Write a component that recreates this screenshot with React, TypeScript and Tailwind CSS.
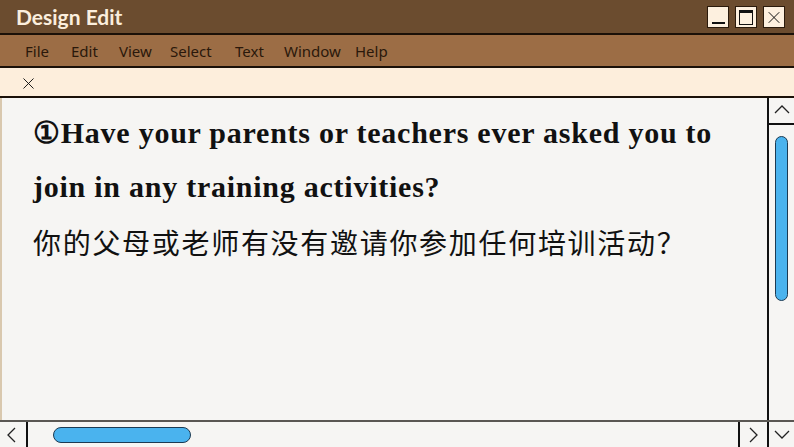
import { X } from "lucide-react";

const MENU: [string, string][] = [
  ["File", "w-[46px]"],
  ["Edit", "w-[48px]"],
  ["View", "w-[51px]"],
  ["Select", "w-[65px]"],
  ["Text", "w-[49px]"],
  ["Window", "w-[71px]"],
  ["Help", ""],
];

function Chevron({ dir }: { dir: "up" | "down" | "left" | "right" }) {
  const d = {
    up: "M3 11 L10 4 L17 11",
    down: "M3 5 L10 12 L17 5",
    left: "M12 2 L5 9 L12 16",
    right: "M6 2 L13 9 L6 16",
  }[dir];
  return (
    <svg width="20" height="18" viewBox="0 0 20 18" fill="none" stroke="#222" strokeWidth="1.3">
      <path d={d} />
    </svg>
  );
}

export default function App() {
  return (
    <div className="w-[794px] h-[447px] flex flex-col overflow-hidden bg-[#f6f5f3] font-['Lato',sans-serif]">
      {/* Title bar */}
      <div className="h-[35px] shrink-0 flex items-center justify-between bg-[#6b4c2f] border-b-2 border-[#1a1008] pl-4 pr-[9px]">
        <span className="text-[21px] font-bold text-[#fbeedd]">Design Edit</span>
        <div className="flex gap-[6px] pt-[1px]">
          <button className="w-[22px] h-[22px] bg-[#fdf0df] border border-[#2a1a0c] flex items-end justify-center pb-[3px]">
            <span className="block w-[13px] h-[2px] bg-[#111]" />
          </button>
          <button className="w-[22px] h-[22px] bg-[#fdf0df] border border-[#2a1a0c] flex items-center justify-center">
            <span className="block w-[14px] h-[15px] border border-[#111] border-t-[3px]" />
          </button>
          <button className="w-[22px] h-[22px] bg-[#fdf0df] border border-[#2a1a0c] flex items-center justify-center">
            <X size={21} strokeWidth={1.2} color="#111" />
          </button>
        </div>
      </div>

      {/* Menu bar */}
      <div className="h-[33px] shrink-0 flex items-center bg-[#9c6d45] border-b-2 border-[#1a1008] pl-[25px] pt-[2px] text-[15px] text-[#2a180b] font-['Noto_Sans',sans-serif]">
        {MENU.map(([m, w]) => (
          <span key={m} className={w}>{m}</span>
        ))}
      </div>

      {/* Tab strip */}
      <div className="h-[30px] shrink-0 flex items-center bg-[#fdeedc] border-b-2 border-[#1a1008] pl-[19px] pt-[2px]">
        <X size={19} strokeWidth={1.2} color="#111" />
      </div>

      {/* Content + vertical scrollbar */}
      <div className="flex-1 flex min-h-0">
        <div className="flex-1 border-l-2 border-[#d9c8ae] pl-[31px] pt-[8px] text-[#111]">
          <p className="font-['Liberation_Serif',serif] font-bold text-[30px] tracking-[0.75px] leading-[54px] whitespace-nowrap">
            ①Have your parents or teachers ever asked you to
            <br />
            join in any training activities?
          </p>
          <p className="font-['Noto_Sans_CJK_SC',sans-serif] text-[28px] tracking-[1.7px] leading-[54px] mt-[1px] whitespace-nowrap">
            你的父母或老师有没有邀请你参加任何培训活动？
          </p>
        </div>
        <div className="w-[27px] shrink-0 border-l-2 border-[#111] flex flex-col">
          <div className="h-[27px] border-b-2 border-[#111] flex items-center justify-center">
            <Chevron dir="up" />
          </div>
          <div className="pt-[11px] flex justify-center">
            <div className="w-[13px] h-[165px] rounded-full bg-[#4ab3ee] border border-[#1c3a52]" />
          </div>
        </div>
      </div>

      {/* Horizontal scrollbar */}
      <div className="h-[27px] shrink-0 flex border-t-2 border-[#5a5753]">
        <div className="w-[28px] border-r-2 border-[#111] flex items-center justify-center">
          <Chevron dir="left" />
        </div>
        <div className="flex-1 flex items-center pl-[25px]">
          <div className="w-[138px] h-[16px] rounded-full bg-[#4ab3ee] border border-[#1c3a52]" />
        </div>
        <div className="w-[29px] border-l-2 border-[#111] flex items-center justify-center">
          <Chevron dir="right" />
        </div>
        <div className="w-[27px] border-l-2 border-[#111] flex items-center justify-center">
          <Chevron dir="down" />
        </div>
      </div>
    </div>
  );
}
